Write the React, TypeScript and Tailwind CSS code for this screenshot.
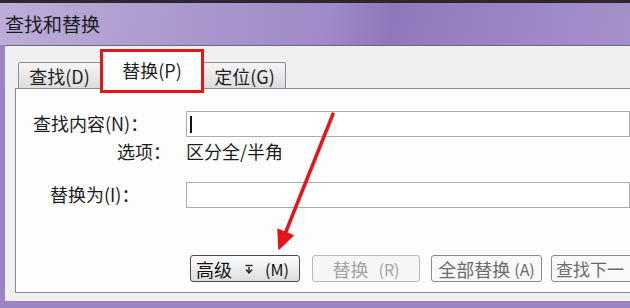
import React from "react";

const font = "font-['Noto_Sans_CJK_SC','Noto_Sans_CJK_JP',sans-serif]";

function DownIcon() {
  return (
    <svg width="8" height="10" viewBox="0 0 8 10" className="shrink-0">
      <path d="M0.5 1.5 H7.5" stroke="#222" strokeWidth="1.4" />
      <path d="M4 3 V9" stroke="#222" strokeWidth="1.4" />
      <path d="M1 5.5 L4 9 L7 5.5" fill="none" stroke="#222" strokeWidth="1.4" />
    </svg>
  );
}

export default function App() {
  return (
    <div className={`relative w-[630px] h-[308px] overflow-hidden bg-[#9c83c4] ${font} text-[#1e1e1e]`}>
      {/* top strip + title bar */}
      <div className="h-[3px] bg-[#2b2630]" />
      <div className="h-[42px] flex items-center pl-[5px] bg-[linear-gradient(100deg,#bcaed8_0%,#ab97cd_30%,#a089c7_52%,#9077b9_62%,#9c84c4_80%,#a690cb_100%)]">
        <span className="text-[19px] leading-none text-[#1a1a1a] -mt-[2px]">查找和替换</span>
      </div>

      {/* dialog body */}
      <div className="ml-[5px] h-[256px] bg-[#f0eff1] border-t border-[#6f6a78] pt-[3px]">
        {/* tabs */}
        <div className="flex items-end pl-[13px]">
          <div className="w-[83px] h-[26px] flex items-center justify-center border border-b-0 border-[#8d8d8d] rounded-t-[2px] bg-[linear-gradient(#f6f6f6,#dcdcdc)] text-[18px] leading-none">
            查找(D)
          </div>
          <div className="relative z-10 w-[104px] h-[44px] -mb-[5px] -ml-[1px] flex items-center justify-center border-[3px] border-[#e3161b] bg-white text-[18px] leading-none pb-[3px]">
            替换(P)
          </div>
          <div className="w-[83px] h-[26px] -ml-[1px] flex items-center justify-center border border-b-0 border-[#8d8d8d] rounded-t-[2px] bg-[linear-gradient(#f6f6f6,#dcdcdc)] text-[18px] leading-none">
            定位(G)
          </div>
        </div>

        {/* panel */}
        <div className="ml-[10px] h-[205px] bg-[#fdfdfe] border-l border-t border-b border-[#898c95] pt-[22px] pl-[17px]">
          <div className="flex items-center h-[26px]">
            <span className="w-[153px] text-[18px] leading-none -mt-[3px]">查找内容(N)：</span>
            <div className="flex-1 h-[26px] border border-[#abadb3] bg-white flex items-center pl-[3px]">
              <div className="w-[2px] h-[17px] bg-[#111]" />
            </div>
          </div>
          <div className="flex items-center h-[22px] mt-[3px]">
            <span className="w-[153px] pl-[84px] text-[18px] leading-none">选项：</span>
            <span className="text-[18px] leading-none">区分全/半角</span>
          </div>
          <div className="flex items-center h-[26px] mt-[20px]">
            <span className="w-[153px] pl-[17px] text-[18px] leading-none -mt-[3px]">替换为(I)：</span>
            <div className="flex-1 h-[26px] border border-[#abadb3] bg-white" />
          </div>

          {/* buttons */}
          <div className="flex items-center mt-[47px] ml-[157px] h-[27px] text-[18px] leading-none whitespace-nowrap">
            <div className="w-[110px] h-[27px] shrink-0 flex items-center pl-[5px] border border-[#4d4d4d] rounded-[3px] bg-[linear-gradient(#fdfdfd,#dedede)] text-[#111]">
              <span>高级</span>
              <span className="ml-[13px]"><DownIcon /></span>
              <span className="ml-[12px] text-[16px]">(M)</span>
            </div>
            <div className="ml-[12px] w-[108px] h-[27px] shrink-0 flex items-center justify-center gap-[10px] border border-[#b9b9b9] rounded-[3px] bg-[#f6f6f6] text-[#a3a3a3]">
              <span>替换</span>
              <span className="text-[16px]">(R)</span>
            </div>
            <div className="ml-[11px] w-[111px] h-[27px] shrink-0 flex items-center justify-center gap-[4px] border border-[#8a8a8a] rounded-[3px] bg-[#f9f9f9] text-[#6b6b6b]">
              <span>全部替换</span>
              <span className="text-[16px]">(A)</span>
            </div>
            <div className="ml-[9px] w-[112px] h-[27px] shrink-0 flex items-center pl-[4px] border border-[#8a8a8a] rounded-[3px] bg-[#f9f9f9] text-[#6b6b6b] text-[17px]">
              查找下一
            </div>
          </div>
        </div>
      </div>

      {/* red annotation arrow */}
      <svg className="absolute inset-0 pointer-events-none" width="630" height="308" viewBox="0 0 630 308">
        <path d="M333 114 L285 234" stroke="#e3161b" strokeWidth="3.5" strokeLinecap="round" />
        <path d="M279 249 L293 235.5 L278 229.5 Z" fill="#e3161b" stroke="#e3161b" strokeWidth="1.5" strokeLinejoin="round" />
      </svg>
    </div>
  );
}
